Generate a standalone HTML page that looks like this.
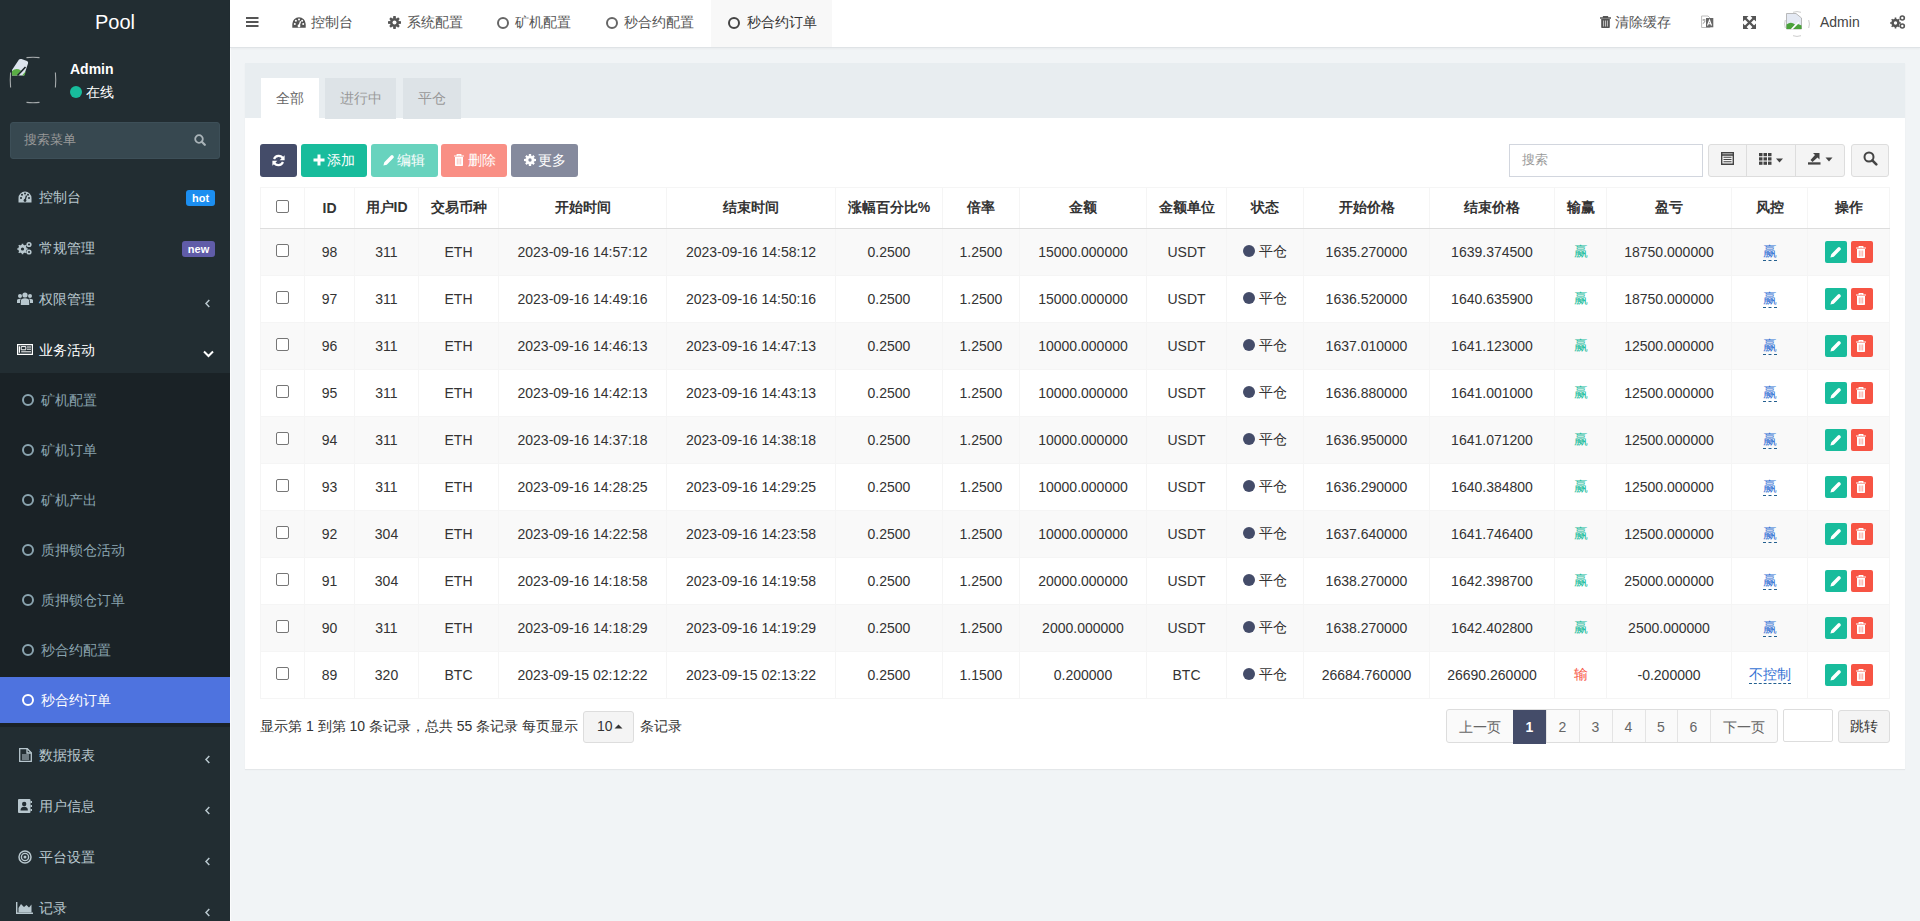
<!DOCTYPE html>
<html><head><meta charset="utf-8">
<style>
*{box-sizing:border-box;margin:0;padding:0}
html,body{width:1920px;height:921px;overflow:hidden}
body{font-family:"Liberation Sans",sans-serif;font-size:14px;color:#333;background:#f1f4f6;position:relative}
.abs{position:absolute}
svg{display:block}
/* sidebar */
#side{position:absolute;left:0;top:0;width:230px;height:921px;background:#222d32}
#logo{position:absolute;left:0;top:0;width:230px;height:44px;line-height:44px;text-align:center;color:#fff;font-size:20px}
.mi{position:absolute;left:0;width:230px;height:20px;line-height:20px;color:#b8c7ce;font-size:14px;white-space:nowrap}
.mi .ic{position:absolute;top:0}
.mi .tx{position:absolute;left:39px;top:0}
.sub{position:absolute;left:0;width:230px;height:20px;line-height:20px;color:#8aa4af;font-size:14px;white-space:nowrap}
.sub .tx{position:absolute;left:41px;top:0}
.ring{position:absolute;left:22px;top:4px;width:12px;height:12px;border:2px solid #8aa4af;border-radius:50%}
.badge{position:absolute;height:16px;line-height:16px;font-size:11px;font-weight:bold;color:#fff;border-radius:3px;text-align:center}
/* header */
#hdr{position:absolute;left:230px;top:0;width:1690px;height:48px;background:#fff;border-bottom:1px solid #dfe3e6;box-shadow:0 1px 2px rgba(0,0,0,.04)}
.ht{position:absolute;top:12px;height:20px;line-height:20px;color:#555;font-size:14px;white-space:nowrap}
/* panel */
#panel{position:absolute;left:245px;top:63px;width:1660px;height:706px;background:#fff;box-shadow:0 1px 1px rgba(0,0,0,.05)}
#ph{position:absolute;left:0;top:0;width:1660px;height:55px;background:#e8edf0}
.tab{position:absolute;top:15px;height:41px;line-height:41px;text-align:center;color:#999;background:#dde3e7;font-size:14px}
.tab.on{background:#fff;color:#666}
.btn{position:absolute;top:81px;height:33px;line-height:33px;border-radius:3px;color:#fff;font-size:14px;white-space:nowrap}

#tbl{position:absolute;border-collapse:collapse;table-layout:fixed;width:1629px;font-size:14px;color:#333}
#tbl td,#tbl th{border:1px solid #f5f5f5;text-align:center;padding:0;white-space:nowrap;overflow:hidden}
#tbl th{height:41px;font-weight:bold;border-bottom:1px solid #ddd;background:#fff}
#tbl td{height:47px}
#tbl tr.od td{background:#f9f9f9}
#tbl tr.ev td{background:#fff}
.cb{display:inline-block;width:13px;height:13px;border:1px solid #767676;border-radius:2px;background:#fff;vertical-align:middle;position:relative;top:-3px}
.dot{display:inline-block;width:12px;height:12px;border-radius:50%;background:#444c69;vertical-align:middle;margin-right:4px;position:relative;top:-1px}
.ed{color:#3572d4;border-bottom:1px dashed #235f8f;padding-bottom:1px}
.ob{display:inline-block;width:22px;height:22px;border-radius:2px;vertical-align:middle;position:relative}
.ob svg{position:absolute;left:5px;top:5px}
#pgx{position:absolute;height:34px;white-space:nowrap;font-size:0;border:1px solid #ddd;border-radius:3px;background:#fafafa;overflow:hidden}
#pgx span{display:inline-block;height:32px;line-height:32px;text-align:center;font-size:14px;color:#666;border-left:1px solid #e4e4e4}
#pgx span:first-child{border-left:0}
#pgx span.on{background:#444c69;color:#fff;border-left-color:#444c69}
.pgc{top:647px;height:34px;line-height:34px;text-align:center;color:#666;font-size:14px}
</style></head><body>

<div id="side">
  <div id="logo">Pool</div>
  <!-- user panel -->
  <svg class="abs" style="left:9px;top:56px" width="48" height="48" viewBox="0 0 48 48">
    <path d="M17.5 1.6 Q24 0.9 30.5 1.6 M17.5 46.4 Q24 47.1 30.5 46.4 M1.6 16.5 Q0.9 24 1.6 31.5 M46.4 16.5 Q47.1 24 46.4 31.5" stroke="rgba(255,255,255,.6)" stroke-width="1.1" fill="none"/>
    <path d="M3 14 L10 3.5 Q11 2.6 12.5 3 L18 5 Q19.6 5.8 19 7.5 L15 19.5 L3 19.5 Z" fill="#dde4ee"/>
    <path d="M3 19.5 L3 15 Q7 11.5 12 14.5 L8.5 19.5 Z" fill="#5aad45"/>
    <path d="M8.5 19.5 L16.5 11" stroke="#1b2328" stroke-width="1.6"/>
    <path d="M13 19.5 L17 15 L15.5 19.5 Z" fill="#5aad45"/>
  </svg>
  <div class="abs" style="left:70px;top:59px;height:20px;line-height:20px;color:#fff;font-weight:bold;font-size:14px">Admin</div>
  <div class="abs" style="left:70px;top:86px;width:12px;height:12px;border-radius:50%;background:#18bc9c"></div>
  <div class="abs" style="left:86px;top:82px;height:20px;line-height:20px;color:#fff;font-size:14px">在线</div>
  <!-- search -->
  <div class="abs" style="left:10px;top:122px;width:210px;height:37px;background:#374850;border:1px solid #3d4f58;border-radius:3px"></div>
  <div class="abs" style="left:24px;top:130px;height:20px;line-height:20px;color:#999;font-size:13px">搜索菜单</div>
  <svg class="abs" style="left:194px;top:134px" width="12" height="12" viewBox="0 0 12 12"><circle cx="5" cy="5" r="3.8" stroke="#a9b3b8" stroke-width="1.8" fill="none"/><path d="M7.8 7.8 L10.8 10.8" stroke="#a9b3b8" stroke-width="2.2" stroke-linecap="round"/></svg>

  <!-- top menu -->
  <div class="mi" style="top:187px">
    <svg class="ic" style="left:18px;top:4px" width="14" height="12" viewBox="0 0 14 12"><path d="M7 0.5 A6.5 6.5 0 0 0 0.5 7 L0.5 11.5 L13.5 11.5 L13.5 7 A6.5 6.5 0 0 0 7 0.5 Z" fill="#b8c7ce"/><circle cx="3" cy="7" r="1" fill="#222d32"/><circle cx="4" cy="3.8" r="1" fill="#222d32"/><circle cx="7" cy="2.6" r="1" fill="#222d32"/><circle cx="10" cy="3.8" r="1" fill="#222d32"/><circle cx="11" cy="7" r="1" fill="#222d32"/><path d="M7 9.5 L8.5 4.5" stroke="#222d32" stroke-width="1.3"/><circle cx="7" cy="9.5" r="1.4" fill="#222d32"/></svg>
    <span class="tx">控制台</span>
  </div>
  <div class="badge" style="left:186px;top:190px;width:29px;background:#1c8ef0">hot</div>

  <div class="mi" style="top:238px">
    <svg class="ic" style="left:17px;top:3px" width="16" height="14" viewBox="0 0 16 14"><g fill="#b8c7ce"><circle cx="5.5" cy="8" r="4.2"/><circle cx="12" cy="3.5" r="2.6"/><circle cx="12" cy="11" r="2.6"/></g><g fill="#222d32"><circle cx="5.5" cy="8" r="1.6"/><circle cx="12" cy="3.5" r="1"/><circle cx="12" cy="11" r="1"/></g><g stroke="#b8c7ce" stroke-width="1.6"><path d="M5.5 2.8 V13.2 M0.3 8 H10.7 M1.8 4.3 L9.2 11.7 M9.2 4.3 L1.8 11.7"/></g><circle cx="5.5" cy="8" r="1.6" fill="#222d32"/></svg>
    <span class="tx">常规管理</span>
  </div>
  <div class="badge" style="left:182px;top:241px;width:33px;background:#605ca8">new</div>

  <div class="mi" style="top:289px">
    <svg class="ic" style="left:17px;top:3px" width="16" height="14" viewBox="0 0 16 14"><g fill="#b8c7ce"><circle cx="8" cy="3" r="2.6"/><circle cx="3" cy="4" r="2"/><circle cx="13" cy="4" r="2"/><path d="M3.8 13 V9 Q3.8 6.2 8 6.2 Q12.2 6.2 12.2 9 V13 Z"/><path d="M0 11 V8.5 Q0 6.8 3 6.8 L4.2 6.8 Q3 7.8 3 9 V11 Z"/><path d="M16 11 V8.5 Q16 6.8 13 6.8 L11.8 6.8 Q13 7.8 13 9 V11 Z"/></g></svg>
    <span class="tx">权限管理</span>
  </div>
  <svg class="abs" style="left:204px;top:299px" width="7" height="9" viewBox="0 0 7 9"><path d="M5.3 1 L2 4.5 L5.3 8" stroke="#b8c7ce" stroke-width="1.5" fill="none"/></svg>

  <div class="mi" style="top:340px;color:#fff">
    <svg class="ic" style="left:17px;top:4px" width="16" height="11" viewBox="0 0 16 11"><path d="M0.6 0.6 H15.4 V10.4 H0.6 Z M2.4 2.2 V8.8" stroke="#fff" stroke-width="1.2" fill="none"/><path d="M4.2 2.6 H8.8 V5.8 H4.2 Z" stroke="#fff" stroke-width="1" fill="none"/><path d="M10 3 H14 M10 5.2 H14 M4.2 7.8 H14" stroke="#fff" stroke-width="1"/></svg>
    <span class="tx">业务活动</span>
  </div>
  <svg class="abs" style="left:203px;top:350px" width="11" height="8" viewBox="0 0 11 8"><path d="M1 1.5 L5.5 6 L10 1.5" stroke="#fff" stroke-width="2" fill="none"/></svg>

  <!-- submenu -->
  <div class="abs" style="left:0;top:373px;width:230px;height:354px;background:#1a2226"></div>
  <div class="sub" style="top:390px"><i class="ring"></i><span class="tx">矿机配置</span></div>
  <div class="sub" style="top:440px"><i class="ring"></i><span class="tx">矿机订单</span></div>
  <div class="sub" style="top:490px"><i class="ring"></i><span class="tx">矿机产出</span></div>
  <div class="sub" style="top:540px"><i class="ring"></i><span class="tx">质押锁仓活动</span></div>
  <div class="sub" style="top:590px"><i class="ring"></i><span class="tx">质押锁仓订单</span></div>
  <div class="sub" style="top:640px"><i class="ring"></i><span class="tx">秒合约配置</span></div>
  <div class="abs" style="left:0;top:677px;width:230px;height:46px;background:#4e73df"></div>
  <div class="sub" style="top:690px;color:#fff"><i class="ring" style="border-color:#fff"></i><span class="tx">秒合约订单</span></div>

  <!-- bottom menu -->
  <div class="mi" style="top:745px">
    <svg class="ic" style="left:19px;top:3px" width="13" height="14" viewBox="0 0 13 14"><path d="M0.7 0.7 H8.3 L12.3 4.7 V13.3 H0.7 Z" stroke="#b8c7ce" stroke-width="1.3" fill="none"/><path d="M8 0.7 V5 H12.3" stroke="#b8c7ce" stroke-width="1.3" fill="none"/><path d="M3 7 H10 M3 9 H10 M3 11 H10" stroke="#b8c7ce" stroke-width="1"/></svg>
    <span class="tx">数据报表</span>
  </div>
  <svg class="abs" style="left:204px;top:755px" width="7" height="9" viewBox="0 0 7 9"><path d="M5.3 1 L2 4.5 L5.3 8" stroke="#b8c7ce" stroke-width="1.5" fill="none"/></svg>

  <div class="mi" style="top:796px">
    <svg class="ic" style="left:18px;top:3px" width="14" height="14" viewBox="0 0 14 14"><rect x="0" y="0" width="12.5" height="14" rx="1" fill="#b8c7ce"/><rect x="12.5" y="2" width="1.5" height="2" fill="#b8c7ce"/><rect x="12.5" y="6" width="1.5" height="2" fill="#b8c7ce"/><rect x="12.5" y="10" width="1.5" height="2" fill="#b8c7ce"/><circle cx="6.2" cy="5" r="2.2" fill="#222d32"/><path d="M2.5 11.5 Q2.5 7.8 6.2 7.8 Q9.9 7.8 9.9 11.5 Z" fill="#222d32"/></svg>
    <span class="tx">用户信息</span>
  </div>
  <svg class="abs" style="left:204px;top:806px" width="7" height="9" viewBox="0 0 7 9"><path d="M5.3 1 L2 4.5 L5.3 8" stroke="#b8c7ce" stroke-width="1.5" fill="none"/></svg>

  <div class="mi" style="top:847px">
    <svg class="ic" style="left:18px;top:3px" width="14" height="14" viewBox="0 0 14 14"><circle cx="7" cy="7" r="6" stroke="#b8c7ce" stroke-width="1.5" fill="none"/><circle cx="7" cy="7" r="3.6" stroke="#b8c7ce" stroke-width="1.4" fill="none"/><circle cx="7" cy="7" r="1.5" fill="#b8c7ce"/></svg>
    <span class="tx">平台设置</span>
  </div>
  <svg class="abs" style="left:204px;top:857px" width="7" height="9" viewBox="0 0 7 9"><path d="M5.3 1 L2 4.5 L5.3 8" stroke="#b8c7ce" stroke-width="1.5" fill="none"/></svg>

  <div class="mi" style="top:898px">
    <svg class="ic" style="left:16px;top:4px" width="17" height="12" viewBox="0 0 17 12"><path d="M0.7 0 V11.3 H17" stroke="#b8c7ce" stroke-width="1.4" fill="none"/><path d="M2.5 10.5 V6 L5 2 L8 5 L10.5 3 L13 5.5 L15.5 2.5 V10.5 Z" fill="#b8c7ce"/></svg>
    <span class="tx">记录</span>
  </div>
  <svg class="abs" style="left:204px;top:908px" width="7" height="9" viewBox="0 0 7 9"><path d="M5.3 1 L2 4.5 L5.3 8" stroke="#b8c7ce" stroke-width="1.5" fill="none"/></svg>
</div>

<div class="abs" style="left:230px;top:0;width:1px;height:921px;background:#fbfcfd"></div>
<div id="hdr">
  <svg class="abs" style="left:16px;top:17px" width="13" height="10" viewBox="0 0 13 10"><path d="M0 1 H12.5 M0 5 H12.5 M0 9 H12.5" stroke="#555" stroke-width="2"/></svg>

  <svg class="abs" style="left:62px;top:17px" width="14" height="11" viewBox="0 0 14 11"><path d="M7 0.3 A6.7 6.7 0 0 0 0.3 7 L0.3 10.7 L13.7 10.7 L13.7 7 A6.7 6.7 0 0 0 7 0.3 Z" fill="#555"/><circle cx="2.8" cy="7" r="1" fill="#fff"/><circle cx="3.9" cy="3.7" r="1" fill="#fff"/><circle cx="7" cy="2.4" r="1" fill="#fff"/><circle cx="10.1" cy="3.7" r="1" fill="#fff"/><circle cx="11.2" cy="7" r="1" fill="#fff"/><path d="M7 9 L8.6 4.2" stroke="#fff" stroke-width="1.3"/><circle cx="7" cy="9" r="1.4" fill="#fff"/></svg>
  <div class="ht" style="left:81px">控制台</div>

  <svg class="abs" style="left:158px;top:16px" width="13" height="13" viewBox="0 0 13 13"><g fill="#555"><circle cx="6.5" cy="6.5" r="4.6"/><path d="M5.3 0 H7.7 L8 2.5 H5 Z M5.3 13 H7.7 L8 10.5 H5 Z M0 5.3 V7.7 L2.5 8 V5 Z M13 5.3 V7.7 L10.5 8 V5 Z"/><path d="M1.2 2.9 L2.9 1.2 L4.7 3 L3 4.7 Z M11.8 2.9 L10.1 1.2 L8.3 3 L10 4.7 Z M1.2 10.1 L2.9 11.8 L4.7 10 L3 8.3 Z M11.8 10.1 L10.1 11.8 L8.3 10 L10 8.3 Z"/></g><circle cx="6.5" cy="6.5" r="2" fill="#fff"/></svg>
  <div class="ht" style="left:177px">系统配置</div>

  <i class="abs" style="left:267px;top:17px;width:12px;height:12px;border:2px solid #666;border-radius:50%"></i>
  <div class="ht" style="left:285px">矿机配置</div>
  <i class="abs" style="left:376px;top:17px;width:12px;height:12px;border:2px solid #666;border-radius:50%"></i>
  <div class="ht" style="left:394px">秒合约配置</div>

  <div class="abs" style="left:481px;top:0;width:121px;height:47px;background:#f8f8f8"></div>
  <i class="abs" style="left:498px;top:17px;width:12px;height:12px;border:2px solid #444;border-radius:50%"></i>
  <div class="ht" style="left:517px;color:#333">秒合约订单</div>

  <svg class="abs" style="left:1370px;top:16px" width="11" height="12" viewBox="0 0 11 12"><path d="M0 2 H11 M3.5 2 V0.6 H7.5 V2" stroke="#555" stroke-width="1.3" fill="none"/><path d="M1.2 3 H9.8 V11.3 Q9.8 12 9 12 H2 Q1.2 12 1.2 11.3 Z" fill="#555"/><path d="M3.6 4.5 V10.5 M5.5 4.5 V10.5 M7.4 4.5 V10.5" stroke="#cfcfcf" stroke-width=".9"/></svg>
  <div class="ht" style="left:1385px">清除缓存</div>

  <svg class="abs" style="left:1471px;top:15px" width="13" height="14" viewBox="0 0 13 14"><path d="M0.6 1 H7 L9 3 V12.5 H0.6 Z" stroke="#bbb" stroke-width="1" fill="#fff"/><path d="M5 3 H12.3 V12.3 H5 Z" fill="#666"/><path d="M6.5 10.5 L8.5 5 L10.5 10.5 M7.2 8.7 H9.8" stroke="#fff" stroke-width="1.1" fill="none"/><path d="M1.5 5 H4.5 M3 4 V5.5 M1.8 8.5 Q3.5 8 4 6" stroke="#888" stroke-width=".9" fill="none"/></svg>

  <svg class="abs" style="left:1513px;top:16px" width="13" height="13" viewBox="0 0 13 13"><g fill="#555"><path d="M0 0 H5.5 L0 5.5 Z M13 0 H7.5 L13 5.5 Z M0 13 H5.5 L0 7.5 Z M13 13 H7.5 L13 7.5 Z"/></g><path d="M2 2 L11 11 M11 2 L2 11" stroke="#555" stroke-width="2.4"/></svg>

  <svg class="abs" style="left:1554px;top:11px" width="26" height="26" viewBox="0 0 26 26">
    <path d="M9 1.3 A12 12 0 0 1 17 1.3 M9 24.7 A12 12 0 0 0 17 24.7 M1.3 9 A12 12 0 0 0 1.3 17 M24.7 9 A12 12 0 0 1 24.7 17" stroke="#ccc" stroke-width="1" fill="none"/>
    <path d="M2.5 2.5 H12 L17.5 7 V18 H2.5 Z" fill="#e4e9f3" stroke="#aaa" stroke-width=".8"/>
    <path d="M2.5 18 V13.5 Q7 10 11 13.5 L7 18 Z" fill="#4aa23a"/>
    <path d="M9 18 L14 13 L17.5 14.5 V18 Z" fill="#4aa23a"/>
    <path d="M7.5 18.3 L15 10.8" stroke="#fff" stroke-width="1.2"/>
  </svg>
  <div class="ht" style="left:1590px;color:#444">Admin</div>

  <svg class="abs" style="left:1660px;top:15px" width="16" height="14" viewBox="0 0 16 14"><g fill="#555"><circle cx="5.5" cy="8" r="4.2"/><circle cx="12.3" cy="3" r="2.8"/><circle cx="12.3" cy="11" r="2.8"/></g><g stroke="#555" stroke-width="1.6"><path d="M5.5 2.6 V13.4 M0.1 8 H10.9 M1.7 4.2 L9.3 11.8 M9.3 4.2 L1.7 11.8"/></g><circle cx="5.5" cy="8" r="1.7" fill="#fff"/><circle cx="12.3" cy="3" r="1.2" fill="#fff"/><circle cx="12.3" cy="11" r="1.2" fill="#fff"/></svg>
</div>

<div id="panel">
  <div id="ph">
    <div class="tab on" style="left:16px;width:58px">全部</div>
    <div class="tab" style="left:80px;width:71px">进行中</div>
    <div class="tab" style="left:158px;width:58px">平仓</div>
  </div>

  <!-- toolbar -->
  <div class="btn" style="left:15px;width:37px;background:#444c69">
    <svg class="abs" style="left:12px;top:10px" width="13" height="13" viewBox="0 0 13 13"><path d="M11 4.6 A5 5 0 0 0 2 5" stroke="#fff" stroke-width="2.2" fill="none"/><path d="M12.6 1.2 V6.2 H7.6 Z" fill="#fff"/><path d="M2 8.4 A5 5 0 0 0 11 8" stroke="#fff" stroke-width="2.2" fill="none"/><path d="M0.4 11.8 V6.8 H5.4 Z" fill="#fff"/></svg>
  </div>
  <div class="btn" style="left:56px;width:66px;background:#18bc9c">
    <svg class="abs" style="left:12px;top:10px" width="12" height="12" viewBox="0 0 12 12"><path d="M6 0.5 V11.5 M0.5 6 H11.5" stroke="#fff" stroke-width="3"/></svg>
    <span class="abs" style="left:26px;top:0">添加</span>
  </div>
  <div class="btn" style="left:126px;width:67px;background:#18bc9c;opacity:.65">
    <svg class="abs" style="left:12px;top:10px" width="12" height="12" viewBox="0 0 12 12"><path d="M1.3 8.2 L7.9 1.6 Q9 0.5 10.1 1.6 L10.4 1.9 Q11.5 3 10.4 4.1 L3.8 10.7 L0.4 11.6 Z" fill="#fff"/></svg>
    <span class="abs" style="left:26px;top:0">编辑</span>
  </div>
  <div class="btn" style="left:196px;width:66px;background:#f75444;opacity:.65">
    <svg class="abs" style="left:13px;top:10px" width="10" height="12" viewBox="0 0 10 12"><path d="M0 2 H10 M3.2 2 V0.6 H6.8 V2" stroke="#fff" stroke-width="1.2" fill="none"/><path d="M1 3 H9 V11.3 Q9 12 8.3 12 H1.7 Q1 12 1 11.3 Z" fill="#fff"/><path d="M3.3 4.5 V10.5 M5 4.5 V10.5 M6.7 4.5 V10.5" stroke="#f75444" stroke-width=".8" opacity=".6"/></svg>
    <span class="abs" style="left:27px;top:0">删除</span>
  </div>
  <div class="btn" style="left:266px;width:67px;background:#444c69;opacity:.65">
    <svg class="abs" style="left:13px;top:10px" width="12" height="12" viewBox="0 0 13 13"><g fill="#fff"><circle cx="6.5" cy="6.5" r="4.6"/><path d="M5.3 0 H7.7 L8 2.5 H5 Z M5.3 13 H7.7 L8 10.5 H5 Z M0 5.3 V7.7 L2.5 8 V5 Z M13 5.3 V7.7 L10.5 8 V5 Z"/><path d="M1.2 2.9 L2.9 1.2 L4.7 3 L3 4.7 Z M11.8 2.9 L10.1 1.2 L8.3 3 L10 4.7 Z M1.2 10.1 L2.9 11.8 L4.7 10 L3 8.3 Z M11.8 10.1 L10.1 11.8 L8.3 10 L10 8.3 Z"/></g><circle cx="6.5" cy="6.5" r="1.8" fill="#444c69"/></svg>
    <span class="abs" style="left:27px;top:0">更多</span>
  </div>

  <!-- search box & toolbar right -->
  <div class="abs" style="left:1264px;top:81px;width:194px;height:33px;border:1px solid #d2d6de;background:#fff"></div>
  <div class="abs" style="left:1277px;top:87px;height:20px;line-height:20px;color:#999;font-size:13px">搜索</div>
  <div class="abs" style="left:1463px;top:81px;width:137px;height:33px;border:1px solid #ddd;background:#f4f4f4;border-radius:3px"></div>
  <div class="abs" style="left:1501px;top:81px;width:1px;height:33px;background:#ddd"></div>
  <div class="abs" style="left:1550px;top:81px;width:1px;height:33px;background:#ddd"></div>
  <div class="abs" style="left:1606px;top:81px;width:38px;height:33px;border:1px solid #ddd;background:#f4f4f4;border-radius:3px"></div>
  <svg class="abs" style="left:1476px;top:89px" width="13" height="13" viewBox="0 0 13 13"><path d="M0.7 0.7 H12.3 V12.3 H0.7 Z" stroke="#444" stroke-width="1.4" fill="none"/><path d="M0.7 3 H12.3" stroke="#444" stroke-width="1.6"/><path d="M2.5 5.2 H10.5 M2.5 7.5 H10.5 M2.5 9.8 H10.5" stroke="#444" stroke-width="1.1"/></svg>
  <svg class="abs" style="left:1514px;top:90px" width="25" height="12" viewBox="0 0 25 12"><g fill="#444"><rect x="0" y="0" width="3.5" height="3.2"/><rect x="4.5" y="0" width="3.5" height="3.2"/><rect x="9" y="0" width="3.5" height="3.2"/><rect x="0" y="4.3" width="3.5" height="3.2"/><rect x="4.5" y="4.3" width="3.5" height="3.2"/><rect x="9" y="4.3" width="3.5" height="3.2"/><rect x="0" y="8.6" width="3.5" height="3.2"/><rect x="4.5" y="8.6" width="3.5" height="3.2"/><rect x="9" y="8.6" width="3.5" height="3.2"/><path d="M17 5.5 H24 L20.5 9.5 Z"/></g></svg>
  <svg class="abs" style="left:1563px;top:89px" width="25" height="13" viewBox="0 0 25 13"><g fill="#444"><rect x="0" y="10.3" width="12.5" height="2.3"/><path d="M5 1 H11.5 V7.5 L9.5 5.5 L4.5 10 L2.5 8 L7 3 Z"/><path d="M17.5 5.5 H24.5 L21 9.5 Z"/></g></svg>
  <svg class="abs" style="left:1618px;top:88px" width="15" height="15" viewBox="0 0 15 15"><circle cx="6" cy="6" r="4.5" stroke="#444" stroke-width="2" fill="none"/><path d="M9.3 9.3 L13.3 13.3" stroke="#444" stroke-width="2.6" stroke-linecap="round"/></svg>
<table id="tbl" style="left:15px;top:124px"><colgroup><col style="width:44px"><col style="width:50px"><col style="width:64px"><col style="width:80px"><col style="width:168px"><col style="width:169px"><col style="width:107px"><col style="width:77px"><col style="width:127px"><col style="width:80px"><col style="width:77px"><col style="width:126px"><col style="width:125px"><col style="width:52px"><col style="width:125px"><col style="width:76px"><col style="width:82px"></colgroup>
<tr class="th"><th><i class="cb"></i></th><th>ID</th><th>用户ID</th><th>交易币种</th><th>开始时间</th><th>结束时间</th><th>涨幅百分比%</th><th>倍率</th><th>金额</th><th>金额单位</th><th>状态</th><th>开始价格</th><th>结束价格</th><th>输赢</th><th>盈亏</th><th>风控</th><th>操作</th></tr>
<tr class="od"><td><i class="cb"></i></td><td>98</td><td>311</td><td>ETH</td><td>2023-09-16 14:57:12</td><td>2023-09-16 14:58:12</td><td>0.2500</td><td>1.2500</td><td>15000.000000</td><td>USDT</td><td><span class="dot"></span>平仓</td><td>1635.270000</td><td>1639.374500</td><td><span style="color:#18bc9c">赢</span></td><td>18750.000000</td><td><span class="ed">赢</span></td><td><span class="ob" style="background:#18bc9c"><svg width="12" height="12" viewBox="0 0 12 12"><path d="M1.3 8.2 L7.9 1.6 Q9 0.5 10.1 1.6 L10.4 1.9 Q11.5 3 10.4 4.1 L3.8 10.7 L0.4 11.6 Z" fill="#fff"/></svg></span><span class="ob" style="background:#f75444;margin-left:4px"><svg width="10" height="12" viewBox="0 0 10 12"><path d="M0 2 H10 M3.2 2 V0.6 H6.8 V2" stroke="#fff" stroke-width="1.2" fill="none"/><path d="M1 3 H9 V11.3 Q9 12 8.3 12 H1.7 Q1 12 1 11.3 Z" fill="#fff"/><path d="M3.3 4.5 V10.5 M5 4.5 V10.5 M6.7 4.5 V10.5" stroke="#f75444" stroke-width=".8" opacity=".6"/></svg></span></td></tr>
<tr class="ev"><td><i class="cb"></i></td><td>97</td><td>311</td><td>ETH</td><td>2023-09-16 14:49:16</td><td>2023-09-16 14:50:16</td><td>0.2500</td><td>1.2500</td><td>15000.000000</td><td>USDT</td><td><span class="dot"></span>平仓</td><td>1636.520000</td><td>1640.635900</td><td><span style="color:#18bc9c">赢</span></td><td>18750.000000</td><td><span class="ed">赢</span></td><td><span class="ob" style="background:#18bc9c"><svg width="12" height="12" viewBox="0 0 12 12"><path d="M1.3 8.2 L7.9 1.6 Q9 0.5 10.1 1.6 L10.4 1.9 Q11.5 3 10.4 4.1 L3.8 10.7 L0.4 11.6 Z" fill="#fff"/></svg></span><span class="ob" style="background:#f75444;margin-left:4px"><svg width="10" height="12" viewBox="0 0 10 12"><path d="M0 2 H10 M3.2 2 V0.6 H6.8 V2" stroke="#fff" stroke-width="1.2" fill="none"/><path d="M1 3 H9 V11.3 Q9 12 8.3 12 H1.7 Q1 12 1 11.3 Z" fill="#fff"/><path d="M3.3 4.5 V10.5 M5 4.5 V10.5 M6.7 4.5 V10.5" stroke="#f75444" stroke-width=".8" opacity=".6"/></svg></span></td></tr>
<tr class="od"><td><i class="cb"></i></td><td>96</td><td>311</td><td>ETH</td><td>2023-09-16 14:46:13</td><td>2023-09-16 14:47:13</td><td>0.2500</td><td>1.2500</td><td>10000.000000</td><td>USDT</td><td><span class="dot"></span>平仓</td><td>1637.010000</td><td>1641.123000</td><td><span style="color:#18bc9c">赢</span></td><td>12500.000000</td><td><span class="ed">赢</span></td><td><span class="ob" style="background:#18bc9c"><svg width="12" height="12" viewBox="0 0 12 12"><path d="M1.3 8.2 L7.9 1.6 Q9 0.5 10.1 1.6 L10.4 1.9 Q11.5 3 10.4 4.1 L3.8 10.7 L0.4 11.6 Z" fill="#fff"/></svg></span><span class="ob" style="background:#f75444;margin-left:4px"><svg width="10" height="12" viewBox="0 0 10 12"><path d="M0 2 H10 M3.2 2 V0.6 H6.8 V2" stroke="#fff" stroke-width="1.2" fill="none"/><path d="M1 3 H9 V11.3 Q9 12 8.3 12 H1.7 Q1 12 1 11.3 Z" fill="#fff"/><path d="M3.3 4.5 V10.5 M5 4.5 V10.5 M6.7 4.5 V10.5" stroke="#f75444" stroke-width=".8" opacity=".6"/></svg></span></td></tr>
<tr class="ev"><td><i class="cb"></i></td><td>95</td><td>311</td><td>ETH</td><td>2023-09-16 14:42:13</td><td>2023-09-16 14:43:13</td><td>0.2500</td><td>1.2500</td><td>10000.000000</td><td>USDT</td><td><span class="dot"></span>平仓</td><td>1636.880000</td><td>1641.001000</td><td><span style="color:#18bc9c">赢</span></td><td>12500.000000</td><td><span class="ed">赢</span></td><td><span class="ob" style="background:#18bc9c"><svg width="12" height="12" viewBox="0 0 12 12"><path d="M1.3 8.2 L7.9 1.6 Q9 0.5 10.1 1.6 L10.4 1.9 Q11.5 3 10.4 4.1 L3.8 10.7 L0.4 11.6 Z" fill="#fff"/></svg></span><span class="ob" style="background:#f75444;margin-left:4px"><svg width="10" height="12" viewBox="0 0 10 12"><path d="M0 2 H10 M3.2 2 V0.6 H6.8 V2" stroke="#fff" stroke-width="1.2" fill="none"/><path d="M1 3 H9 V11.3 Q9 12 8.3 12 H1.7 Q1 12 1 11.3 Z" fill="#fff"/><path d="M3.3 4.5 V10.5 M5 4.5 V10.5 M6.7 4.5 V10.5" stroke="#f75444" stroke-width=".8" opacity=".6"/></svg></span></td></tr>
<tr class="od"><td><i class="cb"></i></td><td>94</td><td>311</td><td>ETH</td><td>2023-09-16 14:37:18</td><td>2023-09-16 14:38:18</td><td>0.2500</td><td>1.2500</td><td>10000.000000</td><td>USDT</td><td><span class="dot"></span>平仓</td><td>1636.950000</td><td>1641.071200</td><td><span style="color:#18bc9c">赢</span></td><td>12500.000000</td><td><span class="ed">赢</span></td><td><span class="ob" style="background:#18bc9c"><svg width="12" height="12" viewBox="0 0 12 12"><path d="M1.3 8.2 L7.9 1.6 Q9 0.5 10.1 1.6 L10.4 1.9 Q11.5 3 10.4 4.1 L3.8 10.7 L0.4 11.6 Z" fill="#fff"/></svg></span><span class="ob" style="background:#f75444;margin-left:4px"><svg width="10" height="12" viewBox="0 0 10 12"><path d="M0 2 H10 M3.2 2 V0.6 H6.8 V2" stroke="#fff" stroke-width="1.2" fill="none"/><path d="M1 3 H9 V11.3 Q9 12 8.3 12 H1.7 Q1 12 1 11.3 Z" fill="#fff"/><path d="M3.3 4.5 V10.5 M5 4.5 V10.5 M6.7 4.5 V10.5" stroke="#f75444" stroke-width=".8" opacity=".6"/></svg></span></td></tr>
<tr class="ev"><td><i class="cb"></i></td><td>93</td><td>311</td><td>ETH</td><td>2023-09-16 14:28:25</td><td>2023-09-16 14:29:25</td><td>0.2500</td><td>1.2500</td><td>10000.000000</td><td>USDT</td><td><span class="dot"></span>平仓</td><td>1636.290000</td><td>1640.384800</td><td><span style="color:#18bc9c">赢</span></td><td>12500.000000</td><td><span class="ed">赢</span></td><td><span class="ob" style="background:#18bc9c"><svg width="12" height="12" viewBox="0 0 12 12"><path d="M1.3 8.2 L7.9 1.6 Q9 0.5 10.1 1.6 L10.4 1.9 Q11.5 3 10.4 4.1 L3.8 10.7 L0.4 11.6 Z" fill="#fff"/></svg></span><span class="ob" style="background:#f75444;margin-left:4px"><svg width="10" height="12" viewBox="0 0 10 12"><path d="M0 2 H10 M3.2 2 V0.6 H6.8 V2" stroke="#fff" stroke-width="1.2" fill="none"/><path d="M1 3 H9 V11.3 Q9 12 8.3 12 H1.7 Q1 12 1 11.3 Z" fill="#fff"/><path d="M3.3 4.5 V10.5 M5 4.5 V10.5 M6.7 4.5 V10.5" stroke="#f75444" stroke-width=".8" opacity=".6"/></svg></span></td></tr>
<tr class="od"><td><i class="cb"></i></td><td>92</td><td>304</td><td>ETH</td><td>2023-09-16 14:22:58</td><td>2023-09-16 14:23:58</td><td>0.2500</td><td>1.2500</td><td>10000.000000</td><td>USDT</td><td><span class="dot"></span>平仓</td><td>1637.640000</td><td>1641.746400</td><td><span style="color:#18bc9c">赢</span></td><td>12500.000000</td><td><span class="ed">赢</span></td><td><span class="ob" style="background:#18bc9c"><svg width="12" height="12" viewBox="0 0 12 12"><path d="M1.3 8.2 L7.9 1.6 Q9 0.5 10.1 1.6 L10.4 1.9 Q11.5 3 10.4 4.1 L3.8 10.7 L0.4 11.6 Z" fill="#fff"/></svg></span><span class="ob" style="background:#f75444;margin-left:4px"><svg width="10" height="12" viewBox="0 0 10 12"><path d="M0 2 H10 M3.2 2 V0.6 H6.8 V2" stroke="#fff" stroke-width="1.2" fill="none"/><path d="M1 3 H9 V11.3 Q9 12 8.3 12 H1.7 Q1 12 1 11.3 Z" fill="#fff"/><path d="M3.3 4.5 V10.5 M5 4.5 V10.5 M6.7 4.5 V10.5" stroke="#f75444" stroke-width=".8" opacity=".6"/></svg></span></td></tr>
<tr class="ev"><td><i class="cb"></i></td><td>91</td><td>304</td><td>ETH</td><td>2023-09-16 14:18:58</td><td>2023-09-16 14:19:58</td><td>0.2500</td><td>1.2500</td><td>20000.000000</td><td>USDT</td><td><span class="dot"></span>平仓</td><td>1638.270000</td><td>1642.398700</td><td><span style="color:#18bc9c">赢</span></td><td>25000.000000</td><td><span class="ed">赢</span></td><td><span class="ob" style="background:#18bc9c"><svg width="12" height="12" viewBox="0 0 12 12"><path d="M1.3 8.2 L7.9 1.6 Q9 0.5 10.1 1.6 L10.4 1.9 Q11.5 3 10.4 4.1 L3.8 10.7 L0.4 11.6 Z" fill="#fff"/></svg></span><span class="ob" style="background:#f75444;margin-left:4px"><svg width="10" height="12" viewBox="0 0 10 12"><path d="M0 2 H10 M3.2 2 V0.6 H6.8 V2" stroke="#fff" stroke-width="1.2" fill="none"/><path d="M1 3 H9 V11.3 Q9 12 8.3 12 H1.7 Q1 12 1 11.3 Z" fill="#fff"/><path d="M3.3 4.5 V10.5 M5 4.5 V10.5 M6.7 4.5 V10.5" stroke="#f75444" stroke-width=".8" opacity=".6"/></svg></span></td></tr>
<tr class="od"><td><i class="cb"></i></td><td>90</td><td>311</td><td>ETH</td><td>2023-09-16 14:18:29</td><td>2023-09-16 14:19:29</td><td>0.2500</td><td>1.2500</td><td>2000.000000</td><td>USDT</td><td><span class="dot"></span>平仓</td><td>1638.270000</td><td>1642.402800</td><td><span style="color:#18bc9c">赢</span></td><td>2500.000000</td><td><span class="ed">赢</span></td><td><span class="ob" style="background:#18bc9c"><svg width="12" height="12" viewBox="0 0 12 12"><path d="M1.3 8.2 L7.9 1.6 Q9 0.5 10.1 1.6 L10.4 1.9 Q11.5 3 10.4 4.1 L3.8 10.7 L0.4 11.6 Z" fill="#fff"/></svg></span><span class="ob" style="background:#f75444;margin-left:4px"><svg width="10" height="12" viewBox="0 0 10 12"><path d="M0 2 H10 M3.2 2 V0.6 H6.8 V2" stroke="#fff" stroke-width="1.2" fill="none"/><path d="M1 3 H9 V11.3 Q9 12 8.3 12 H1.7 Q1 12 1 11.3 Z" fill="#fff"/><path d="M3.3 4.5 V10.5 M5 4.5 V10.5 M6.7 4.5 V10.5" stroke="#f75444" stroke-width=".8" opacity=".6"/></svg></span></td></tr>
<tr class="ev"><td><i class="cb"></i></td><td>89</td><td>320</td><td>BTC</td><td>2023-09-15 02:12:22</td><td>2023-09-15 02:13:22</td><td>0.2500</td><td>1.1500</td><td>0.200000</td><td>BTC</td><td><span class="dot"></span>平仓</td><td>26684.760000</td><td>26690.260000</td><td><span style="color:#f75444">输</span></td><td>-0.200000</td><td><span class="ed">不控制</span></td><td><span class="ob" style="background:#18bc9c"><svg width="12" height="12" viewBox="0 0 12 12"><path d="M1.3 8.2 L7.9 1.6 Q9 0.5 10.1 1.6 L10.4 1.9 Q11.5 3 10.4 4.1 L3.8 10.7 L0.4 11.6 Z" fill="#fff"/></svg></span><span class="ob" style="background:#f75444;margin-left:4px"><svg width="10" height="12" viewBox="0 0 10 12"><path d="M0 2 H10 M3.2 2 V0.6 H6.8 V2" stroke="#fff" stroke-width="1.2" fill="none"/><path d="M1 3 H9 V11.3 Q9 12 8.3 12 H1.7 Q1 12 1 11.3 Z" fill="#fff"/><path d="M3.3 4.5 V10.5 M5 4.5 V10.5 M6.7 4.5 V10.5" stroke="#f75444" stroke-width=".8" opacity=".6"/></svg></span></td></tr>
</table>

  <div class="abs" style="left:15px;top:653px;height:20px;line-height:20px;white-space:nowrap">显示第 1 到第 10 条记录，总共 55 条记录 每页显示</div>
  <div class="abs" style="left:338px;top:648px;width:51px;height:32px;border:1px solid #ddd;background:#f4f4f4;border-radius:3px"></div>
  <div class="abs" style="left:352px;top:653px;height:20px;line-height:20px">10</div>
  <svg class="abs" style="left:369px;top:661px" width="9" height="5" viewBox="0 0 9 5"><path d="M0.5 4.5 H8.5 L4.5 0.5 Z" fill="#333"/></svg>
  <div class="abs" style="left:395px;top:653px;height:20px;line-height:20px">条记录</div>

  <div class="abs" style="left:1201px;top:646px;width:332px;height:34px;border:1px solid #ddd;border-radius:3px;background:#fafafa"></div>
  <div class="abs pgc" style="left:1201px;width:67px">上一页</div>
  <div class="abs pgc" style="left:1268px;width:33px;background:#444c69;color:#fff;font-weight:bold">1</div>
  <div class="abs pgc" style="left:1301px;width:33px">2</div>
  <div class="abs pgc" style="left:1334px;width:33px">3</div>
  <div class="abs pgc" style="left:1367px;width:33px">4</div>
  <div class="abs pgc" style="left:1400px;width:32px">5</div>
  <div class="abs pgc" style="left:1432px;width:33px">6</div>
  <div class="abs pgc" style="left:1465px;width:68px">下一页</div>
  <div class="abs" style="left:1301px;top:647px;width:1px;height:32px;background:#e4e4e4"></div>
  <div class="abs" style="left:1334px;top:647px;width:1px;height:32px;background:#e4e4e4"></div>
  <div class="abs" style="left:1367px;top:647px;width:1px;height:32px;background:#e4e4e4"></div>
  <div class="abs" style="left:1400px;top:647px;width:1px;height:32px;background:#e4e4e4"></div>
  <div class="abs" style="left:1432px;top:647px;width:1px;height:32px;background:#e4e4e4"></div>
  <div class="abs" style="left:1465px;top:647px;width:1px;height:32px;background:#e4e4e4"></div>
  <div class="abs" style="left:1538px;top:646px;width:50px;height:33px;border:1px solid #ddd;background:#fff;border-radius:2px"></div>
  <div class="abs" style="left:1593px;top:647px;width:52px;height:33px;border:1px solid #ddd;background:#f4f4f4;border-radius:3px;text-align:center;line-height:31px;color:#333">跳转</div>

</div>

</body></html>
